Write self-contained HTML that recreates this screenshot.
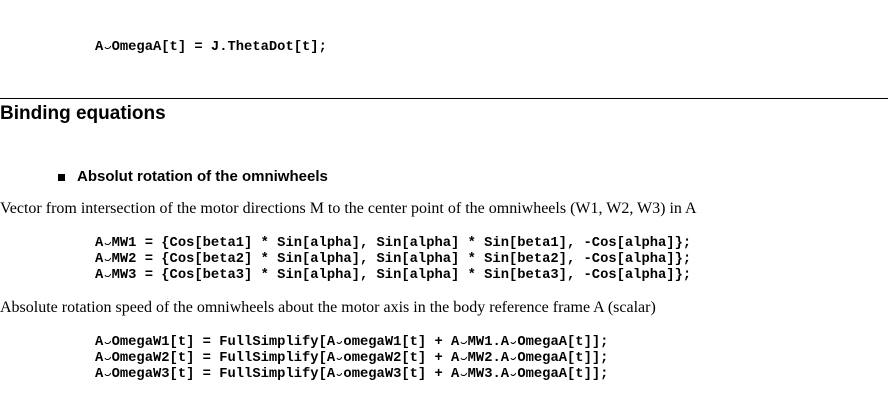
<!DOCTYPE html>
<html><head><meta charset="utf-8"><style>
body{margin:0;width:888px;height:419px;background:#fff;position:relative;overflow:hidden;color:#000}
.c{position:absolute;left:95px;font:bold 13.8px "Liberation Mono",monospace;white-space:pre;line-height:16px}
.p{position:absolute;left:0;font:16px "Liberation Serif",serif;white-space:pre}
i{display:inline-block;width:8.3px;height:7px;box-sizing:border-box;border:1.4px solid transparent;border-bottom-color:#000;border-radius:0 0 50% 50%/0 0 100% 100%;vertical-align:1px}
</style></head><body>
<div class="c" style="top:40px">A<i></i>OmegaA[t] = J.ThetaDot[t];</div>
<div style="position:absolute;left:0;top:98px;width:888px;height:1px;background:#000"></div>
<div style="position:absolute;left:0;top:103px;font:bold 19px 'Liberation Sans',sans-serif">Binding equations</div>
<div style="position:absolute;left:58px;top:174px;width:7px;height:7px;background:#000"></div>
<div style="position:absolute;left:77px;top:168px;font:bold 15px 'Liberation Sans',sans-serif">Absolut rotation of the omniwheels</div>
<div class="p" style="top:200px">Vector from intersection of the motor directions M to the center point of the omniwheels (W1, W2, W3) in A</div>
<div class="c" style="top:236px">A<i></i>MW1 = {Cos[beta1] * Sin[alpha], Sin[alpha] * Sin[beta1], -Cos[alpha]};
A<i></i>MW2 = {Cos[beta2] * Sin[alpha], Sin[alpha] * Sin[beta2], -Cos[alpha]};
A<i></i>MW3 = {Cos[beta3] * Sin[alpha], Sin[alpha] * Sin[beta3], -Cos[alpha]};</div>
<div class="p" style="top:299px">Absolute rotation speed of the omniwheels about the motor axis in the body reference frame A (scalar)</div>
<div class="c" style="top:335px">A<i></i>OmegaW1[t] = FullSimplify[A<i></i>omegaW1[t] + A<i></i>MW1.A<i></i>OmegaA[t]];
A<i></i>OmegaW2[t] = FullSimplify[A<i></i>omegaW2[t] + A<i></i>MW2.A<i></i>OmegaA[t]];
A<i></i>OmegaW3[t] = FullSimplify[A<i></i>omegaW3[t] + A<i></i>MW3.A<i></i>OmegaA[t]];</div>
</body></html>
